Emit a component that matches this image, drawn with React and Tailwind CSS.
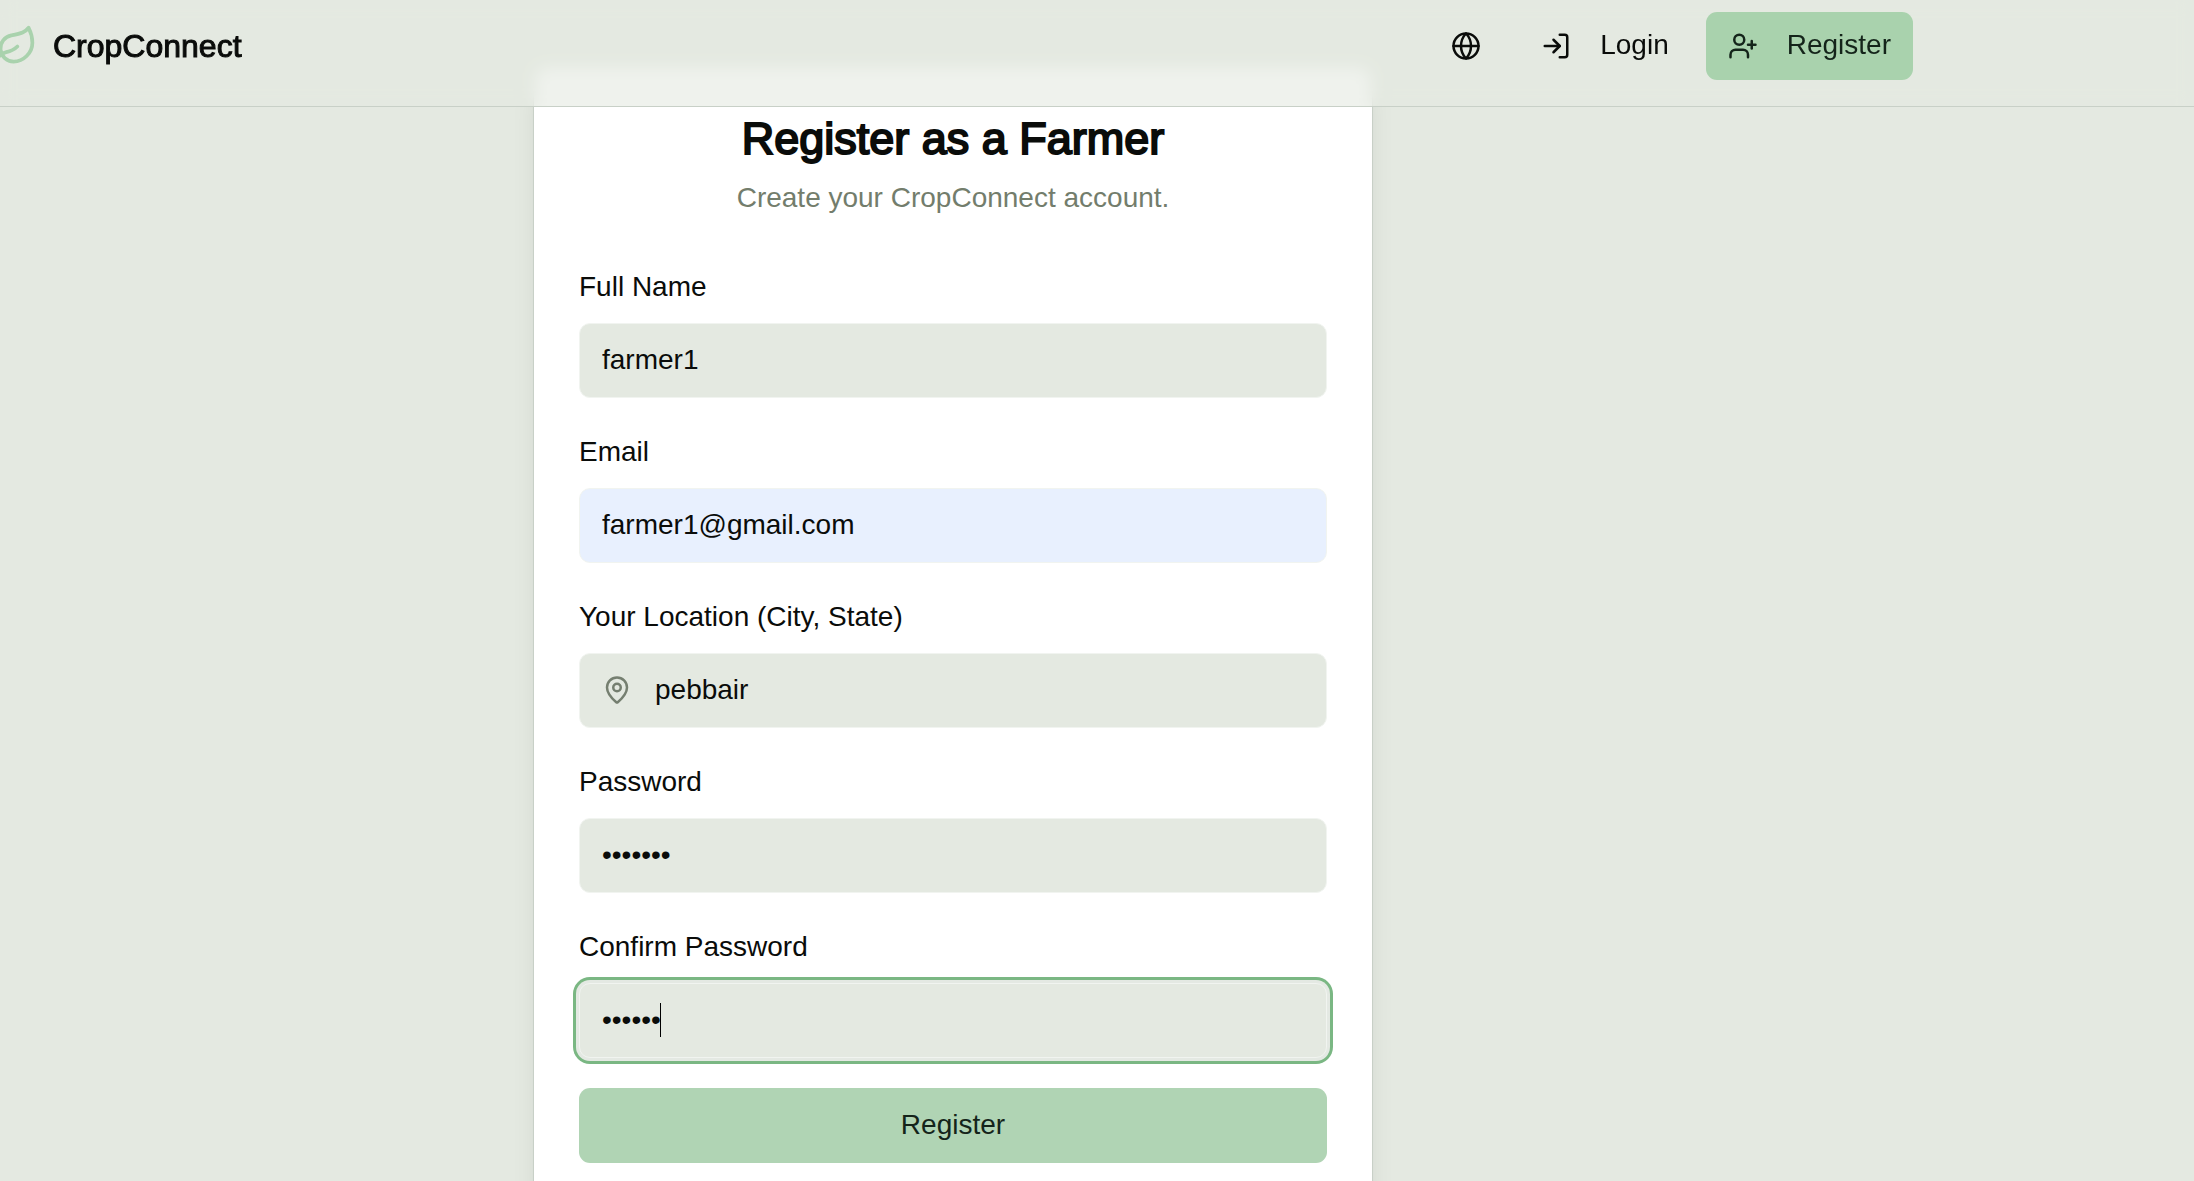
import { Globe, Leaf, LogIn, MapPin, UserPlus } from "lucide-react";

const inputBase =
  "block w-full h-[75px] rounded-[11px] border border-[#f1f4f0] pb-0.5 pr-[22px] text-[28px] text-[#0a0c0a] outline-none";

function Field({ id, label, type = "text", value, tone = "bg-[#e4e9e1]", icon, focused }) {
  return (
    <div>
      <label htmlFor={id} className="mb-[21px] block w-fit text-[28px] leading-[30px]">
        {label}
      </label>
      <div className="relative">
        {icon}
        <input
          id={id}
          type={type}
          defaultValue={value}
          className={[
            inputBase,
            tone,
            icon ? "pl-[75px]" : "pl-[22px]",
            focused
              ? "caret-transparent shadow-[0_0_0_3px_#e4e9e3,0_0_0_6px_#7ab783]"
              : "",
          ].join(" ")}
        />
        {focused && (
          <span className="absolute left-[81px] top-5 h-[34px] w-px bg-black" aria-hidden="true" />
        )}
      </div>
    </div>
  );
}

function Header() {
  return (
    <header className="fixed inset-x-0 top-0 z-10 border-b border-[#c8d0c7] bg-[#e4e9e1]/60 pb-[26px] pt-3 backdrop-blur-[8px]">
      <div className="-ml-[7px] mr-[281px] flex items-center justify-between">
        <a href="#home" className="flex items-center gap-[15px]">
          <Leaf size={45} color="#a9d2ad" />
          <span className="text-[32px] leading-[36px] [-webkit-text-stroke:1px_#0a0c0a]">
            CropConnect
          </span>
        </a>
        <nav className="flex items-center gap-[15px]">
          <button
            type="button"
            aria-label="Language"
            className="mr-1 flex size-[68px] items-center justify-center rounded-[11px]"
          >
            <Globe size={30} />
          </button>
          <a href="#login" className="flex h-[68px] items-center gap-[29px] px-[22px] text-[28px]">
            <LogIn size={30} />
            <span className="pb-0.5 leading-8">Login</span>
          </a>
          <a
            href="#register"
            className="flex h-[68px] items-center gap-[29px] rounded-[11px] bg-[#a9d2ad] px-[22px] text-[28px] text-[#14241a]"
          >
            <UserPlus size={30} />
            <span className="pb-0.5 leading-8">Register</span>
          </a>
        </nav>
      </div>
    </header>
  );
}

export default function App() {
  return (
    <div className="h-screen overflow-hidden bg-[#e4e9e1] font-['Liberation_Sans',Arial,sans-serif] text-[#0a0c0a]">
      <Header />
      <main className="flex justify-center pr-[288px] pt-[66px]">
        <section className="w-full max-w-[840px] rounded-[15px] border border-[#c8d0c7] bg-white px-[45px] pb-[45px] pt-[49px] shadow-[0_19px_28px_-6px_rgb(0_0_0/0.1),0_8px_11px_-8px_rgb(0_0_0/0.1)]">
          <div className="text-center">
            <h1 className="text-[45px] leading-[45px] [-webkit-text-stroke:2px_#0a0c0a]">
              Register as a Farmer
            </h1>
            <p className="mt-[18px] text-[28px] leading-[38px] text-[#737d6c]">
              Create your CropConnect account.
            </p>
          </div>
          <form className="mt-[55px] flex flex-col gap-[30px]">
            <div className="flex flex-col gap-[39px]">
              <Field id="name" label="Full Name" value="farmer1" />
              <Field id="email" label="Email" type="email" value="farmer1@gmail.com" tone="bg-[#e8f0fe]" />
              <Field
                id="location"
                label="Your Location (City, State)"
                value="pebbair"
                icon={
                  <MapPin
                    size={30}
                    color="#757f70"
                    className="pointer-events-none absolute left-[23px] top-[22px]"
                  />
                }
              />
              <Field id="password" label="Password" type="password" value="1234567" />
              <Field id="confirm" label="Confirm Password" type="password" value="123456" focused />
            </div>
            <button
              type="button"
              className="h-[75px] rounded-[11px] bg-[#b0d4b4] pb-0.5 text-[28px] text-[#14241a]"
            >
              Register
            </button>
          </form>
        </section>
      </main>
    </div>
  );
}
